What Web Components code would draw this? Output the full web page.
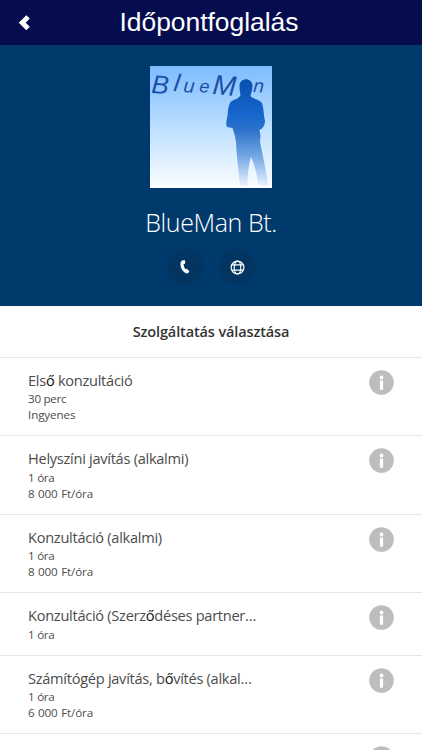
<!DOCTYPE html>
<html lang="hu">
<head>
<meta charset="utf-8">
<title>Időpontfoglalás</title>
<style>
  html, body {
    margin: 0;
    height: 100%;
    overflow: hidden;
    background: #fff;
  }
</style>
</head>
<body>
<booking-page></booking-page>

<script>
class TopBar extends HTMLElement {
  constructor() {
    super()
    this.attachShadow({ mode: 'open' })
    this.shadowRoot.innerHTML = `
      <style>
        :host {
          display: grid;
          grid-template-columns: 50px 1fr 54px;
          align-items: center;
          height: 45px;
          background: #060d4f;
          color: #fff;
        }
        svg { display: block; margin-left: 18px; }
        h1 {
          margin: 0;
          text-align: center;
          white-space: nowrap;
          font: 400 26.4px/45px "Liberation Sans", Arial, sans-serif;
        }
      </style>
      <svg width="13" height="16" viewBox="0 0 13 16">
        <path d="M8.3 0.2 L11.8 3.6 L7.7 7.7 L11.8 11.8 L8.3 15.2 L0.8 7.7 Z" fill="#fff"/>
      </svg>
      <h1><slot></slot></h1>`
  }
}
customElements.define('top-bar', TopBar)

class CompanyLogo extends HTMLElement {
  constructor() {
    super()
    this.attachShadow({ mode: 'open' })
    this.shadowRoot.innerHTML = `
      <style>
        :host { display: block; width: 122px; height: 122px; }
        svg { display: block; }
        text { font: italic 400 24px "Liberation Sans", sans-serif; fill: #1b4fa8; }
      </style>
      <svg width="122" height="122" viewBox="0 0 122 122">
        <defs>
          <linearGradient id="sky" x1="0" y1="0" x2="0" y2="1">
            <stop offset="0" stop-color="#7dbcff"/>
            <stop offset="0.5" stop-color="#bcdfff"/>
            <stop offset="1" stop-color="#fcfeff"/>
          </linearGradient>
          <linearGradient id="man" gradientUnits="userSpaceOnUse" x1="0" y1="13" x2="0" y2="121">
            <stop offset="0" stop-color="#0a50ad"/>
            <stop offset="0.3" stop-color="#1464cc"/>
            <stop offset="0.47" stop-color="#2c72cb"/>
            <stop offset="0.72" stop-color="#75a8e4"/>
            <stop offset="1" stop-color="#edf6ff"/>
          </linearGradient>
        </defs>
        <rect width="122" height="122" fill="url(#sky)"/>
        <text><tspan x="1" y="27" rotate="4" style="font-size:26px">B</tspan><tspan x="23" y="25" rotate="8" style="font-size:25px">l</tspan><tspan x="33" y="26" rotate="5" style="font-size:20px">u</tspan><tspan x="49" y="26" rotate="5" style="font-size:18px">e</tspan><tspan x="62" y="28" rotate="5" style="font-size:28px">M</tspan></text>
        <text x="103" y="26" rotate="4" style="font-size:19px">n</text>
        <path fill="url(#man)" d="M89.500 20 C89.500 11 102.500 11 102.500 20 C102.500 25 101 27 100.500 30
          C102 33 109 33 112 37 C114 43 113.500 49 115 55 C115 60 112 63 109.500 64 L110.500 70
          L110 76 C113 90 116 105 118.500 119.500 L108.500 119.500 C107 109 104.500 98 101 91
          C98.500 99 97.500 110 97.500 119.500 L90 119.500 C88.500 104 86.500 88 86 76
          L84.500 68 L82.500 62 L77 61 C75.500 58 76.500 54 77.500 50 C78 45 78 40 80.500 36
          C84 33 89 33 90.500 29 C90 26 89.500 24 89.500 20 Z"/>
      </svg>`
  }
}
customElements.define('company-logo', CompanyLogo)

class RoundButton extends HTMLElement {
  constructor() {
    super()
    this.attachShadow({ mode: 'open' })
    this.shadowRoot.innerHTML = `
      <style>
        :host {
          display: flex;
          align-items: center;
          justify-content: center;
          width: 36px;
          height: 36px;
          border-radius: 50%;
          background: #033562;
        }
      </style>
      <slot></slot>`
  }
}
customElements.define('round-button', RoundButton)

class CompanyHeader extends HTMLElement {
  constructor() {
    super()
    this.attachShadow({ mode: 'open' })
    this.shadowRoot.innerHTML = `
      <style>
        :host {
          display: flex;
          flex-direction: column;
          align-items: center;
          box-sizing: border-box;
          height: 261px;
          padding-top: 21px;
          background: #003a6c;
          color: #fff;
        }
        h2 {
          margin: 15px 0 8px;
          white-space: nowrap;
          font: 300 25px/38px "Open Sans", "Noto Sans", sans-serif;
          letter-spacing: -0.4px;
        }
        .actions { display: flex; gap: 17px; }
        svg { display: block; }
      </style>
      <company-logo></company-logo>
      <h2><slot></slot></h2>
      <div class="actions">
        <round-button>
          <svg width="10" height="14" viewBox="0 0 10 14">
            <path fill="#fff" d="M2.700 0.300 L4.500 0.200 Q5.200 0.400 5.200 1.200 L5.100 3.300
              Q5 4 4.300 4.100 L3.500 4.200 Q3.700 7.200 5.500 9.300 L6.300 8.900 Q6.900 8.700 7.400 9.200
              L9 10.900 Q9.500 11.600 8.900 12.200 L7.600 13.300 Q6.700 13.900 5.300 13.100
              C1.700 10.800 0.200 7 0.500 3 Q0.800 0.900 2.700 0.300 Z"/>
          </svg>
        </round-button>
        <round-button>
          <svg width="15" height="15" viewBox="0 0 15 15" fill="none" stroke="#fff" stroke-width="1.200">
            <circle cx="7.500" cy="7.500" r="6.400"/>
            <ellipse cx="7.500" cy="7.500" rx="3.300" ry="6.400"/>
            <path d="M1.700 4.900 H13.300 M1.700 10.100 H13.300"/>
          </svg>
        </round-button>
      </div>`
  }
}
customElements.define('company-header', CompanyHeader)

class InfoIcon extends HTMLElement {
  constructor() {
    super()
    this.attachShadow({ mode: 'open' })
    this.shadowRoot.innerHTML = `
      <style>
        :host { display: block; width: 25px; height: 25px; }
        svg { display: block; }
      </style>
      <svg width="25" height="25" viewBox="0 0 25 25">
        <circle cx="12.500" cy="12.500" r="12.300" fill="#bdbdbd"/>
        <circle cx="12.500" cy="7.500" r="1.900" fill="#fff"/>
        <rect x="10.900" y="10.500" width="3.200" height="9.200" fill="#fff"/>
      </svg>`
  }
}
customElements.define('info-icon', InfoIcon)

class ServiceRow extends HTMLElement {
  get data() {
    return this._data;
  }
  set data(data) {
    this._data = data;
    this.render();
  }

  constructor() {
    super()
    this.attachShadow({ mode: 'open' })
    this.shadowRoot.innerHTML = `
      <style>
        :host {
          display: flex;
          justify-content: space-between;
          align-items: flex-start;
          box-sizing: border-box;
          padding: 12px 28px 12px 28px;
          border-bottom: 1px solid #e6e6e6;
          color: #4c4c4c;
          font-family: "Open Sans", "Noto Sans", sans-serif;
          font-weight: 400;
        }
        .name { font-size: 14.6px; line-height: 21.400px; white-space: nowrap; letter-spacing: -0.28px; }
        .name b { font-weight: 400; color: #111; }
        .line { font-size: 11.6px; line-height: 16px; white-space: nowrap; letter-spacing: -0.25px; }
        .line + .line { letter-spacing: -0.1px; word-spacing: 0.6px; }
      </style>
      <div>
        <div class="name"></div>
        <div class="lines"></div>
      </div>
      <info-icon></info-icon>`
  }
  render() {
    this.shadowRoot.querySelector('.name').innerHTML = this.data.name.replace(/ő/g, '<b>ő</b>')
    this.shadowRoot.querySelector('.lines').innerHTML = this.data.lines
      .map(line => `<div class="line">${line}</div>`)
      .join('')
  }
}
customElements.define('service-row', ServiceRow)

class BookingPage extends HTMLElement {
  constructor() {
    super()
    this.services = [
      { name: 'Első konzultáció', lines: ['30 perc', 'Ingyenes'] },
      { name: 'Helyszíni javítás (alkalmi)', lines: ['1 óra', '8 000 Ft/óra'] },
      { name: 'Konzultáció (alkalmi)', lines: ['1 óra', '8 000 Ft/óra'] },
      { name: 'Konzultáció (Szerződéses partner…', lines: ['1 óra'] },
      { name: 'Számítógép javítás, bővítés (alkal…', lines: ['1 óra', '6 000 Ft/óra'] },
      { name: '', lines: [] }
    ]
    this.attachShadow({ mode: 'open' })
    this.shadowRoot.innerHTML = `
      <style>
        :host { display: block; height: 750px; overflow: hidden; background: #fff; }
        h3 {
          margin: 0;
          height: 51px;
          border-bottom: 1px solid #e6e6e6;
          text-align: center;
          color: #333;
          font: 600 14.5px/52px "Open Sans", "Noto Sans", sans-serif;
          letter-spacing: -0.13px;
        }
      </style>
      <top-bar>Időpontfoglalás</top-bar>
      <company-header>BlueMan Bt.</company-header>
      <h3>Szolgáltatás választása</h3>
      <div class="list"></div>`
  }
  connectedCallback() {
    const list = this.shadowRoot.querySelector('.list')
    this.services.forEach(service => {
      const row = document.createElement('service-row')
      row.data = service
      list.appendChild(row)
    })
  }
}
customElements.define('booking-page', BookingPage)
</script>
</body>
</html>
